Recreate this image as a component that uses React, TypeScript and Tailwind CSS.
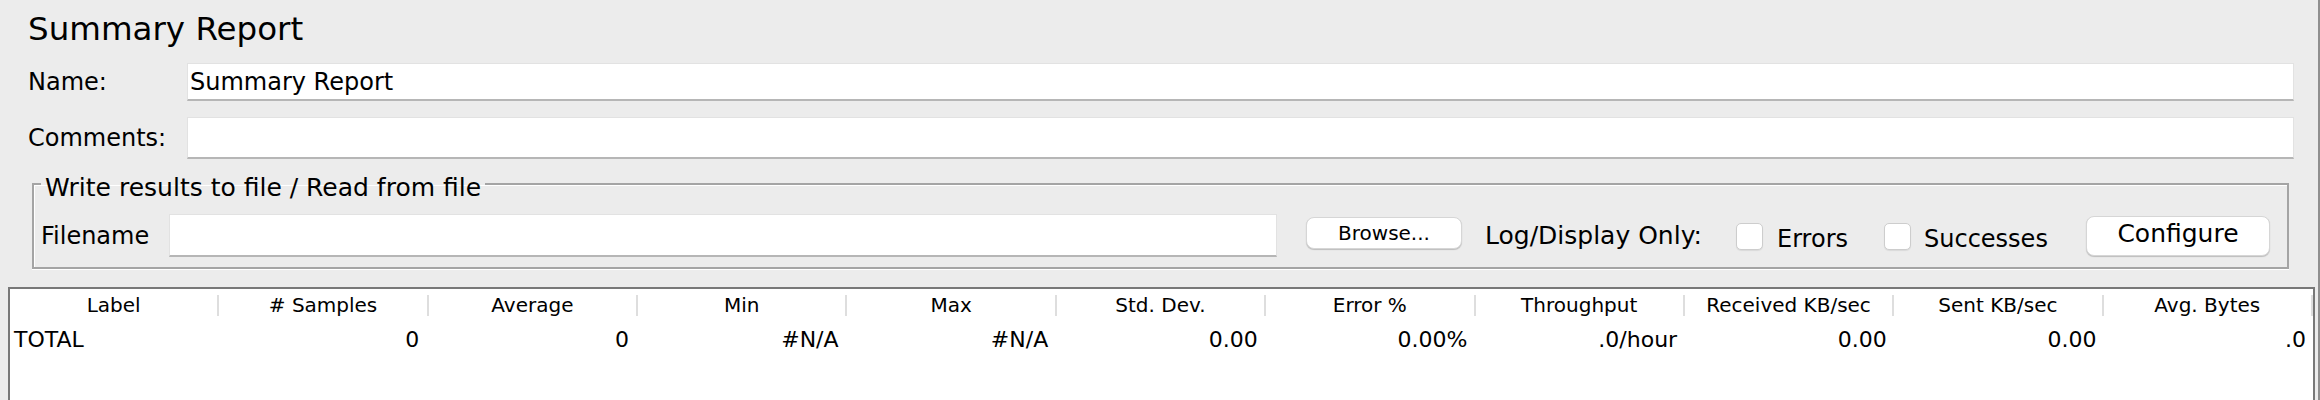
import React from "react";

const columns = [
  { title: "Label", value: "TOTAL", left: true },
  { title: "# Samples", value: "0" },
  { title: "Average", value: "0" },
  { title: "Min", value: "#N/A" },
  { title: "Max", value: "#N/A" },
  { title: "Std. Dev.", value: "0.00" },
  { title: "Error %", value: "0.00%" },
  { title: "Throughput", value: ".0/hour" },
  { title: "Received KB/sec", value: "0.00" },
  { title: "Sent KB/sec", value: "0.00" },
  { title: "Avg. Bytes", value: ".0" },
];

function TextField({ value, h }: { value?: string; h: string }) {
  return (
    <div
      className={`flex-1 ${h} flex items-center bg-white border border-b-2 border-[#e2e2e2] border-b-[#b6b6b6] pl-[2px] text-[24px] text-black`}
    >
      {value}
    </div>
  );
}

function Checkbox() {
  return (
    <div className="w-[27px] h-[27px] shrink-0 rounded-[5px] bg-white border border-[#cdcdcd] shadow-[0_1px_1px_rgba(0,0,0,0.08)]" />
  );
}

export default function App() {
  return (
    <div className="w-[2320px] h-[400px] overflow-hidden bg-[#ececec] border-r-2 border-[#8f8f8f] flex flex-col font-['DejaVu_Sans',sans-serif] text-black">
      <div className="pl-[28px] pr-[24px] pt-[10px]">
        <h1 className="text-[32.5px] leading-[38px] font-normal">Summary Report</h1>

        <div className="mt-[15px] flex items-center">
          <span className="w-[159px] shrink-0 text-[24px]">Name:</span>
          <TextField value="Summary Report" h="h-[38px]" />
        </div>

        <div className="mt-[16px] flex items-center">
          <span className="w-[159px] shrink-0 text-[24px]">Comments:</span>
          <TextField h="h-[42px]" />
        </div>

        <fieldset className="mt-[6px] ml-[4px] mr-[5px] border-2 border-[#a4a4a4] shadow-[inset_1px_1px_0_#fff,0_1px_0_#fff] px-[7px] pr-[17px] pb-[10px]">
          <legend className="px-[4px] pt-[8px] text-[25px] leading-[29px]">
            Write results to file / Read from file
          </legend>
          <div className="mt-[12px] flex items-center h-[43px]">
            <span className="w-[128px] shrink-0 text-[24px]">Filename</span>
            <TextField h="h-[43px]" />
            <button className="ml-[29px] mb-[5px] w-[156px] h-[32px] shrink-0 bg-white rounded-[8px] border border-[#d6d6d6] shadow-[0_1px_1px_rgba(0,0,0,0.2)] text-[20px] leading-none">
              Browse...
            </button>
            <span className="ml-[23px] w-[226px] shrink-0 text-[25px] whitespace-nowrap">
              Log/Display Only:
            </span>
            <div className="ml-[25px] mt-[2px]">
              <Checkbox />
            </div>
            <span className="ml-[14px] mt-[6px] w-[70px] shrink-0 text-[24px]">Errors</span>
            <div className="ml-[37px] mt-[2px]">
              <Checkbox />
            </div>
            <span className="ml-[13px] mt-[6px] w-[124px] shrink-0 text-[24px]">Successes</span>
            <button className="ml-[38px] w-[184px] h-[40px] pb-[4px] shrink-0 bg-white rounded-[8px] border border-[#d6d6d6] shadow-[0_1px_1px_rgba(0,0,0,0.2)] text-[25px] leading-none">
              Configure
            </button>
          </div>
        </fieldset>
      </div>

      <div className="mt-[18px] ml-[8px] mr-[3px] h-[140px] shrink-0 bg-white border-2 border-[#787878]">
        <div className="flex h-[32px]">
          {columns.map((c) => (
            <div key={c.title} className="flex-1 min-w-0 flex items-center">
              <span className="flex-1 text-center text-[20px] whitespace-nowrap">{c.title}</span>
              <span className="w-[2px] h-[21px] bg-[#dedede]" />
            </div>
          ))}
        </div>
        <div className="flex h-[36px] items-center">
          {columns.map((c) => (
            <div
              key={c.title}
              className={`flex-1 min-w-0 text-[22px] whitespace-nowrap ${
                c.left ? "text-left pl-[4px]" : "text-right pr-[7px]"
              }`}
            >
              {c.value}
            </div>
          ))}
        </div>
      </div>
    </div>
  );
}
